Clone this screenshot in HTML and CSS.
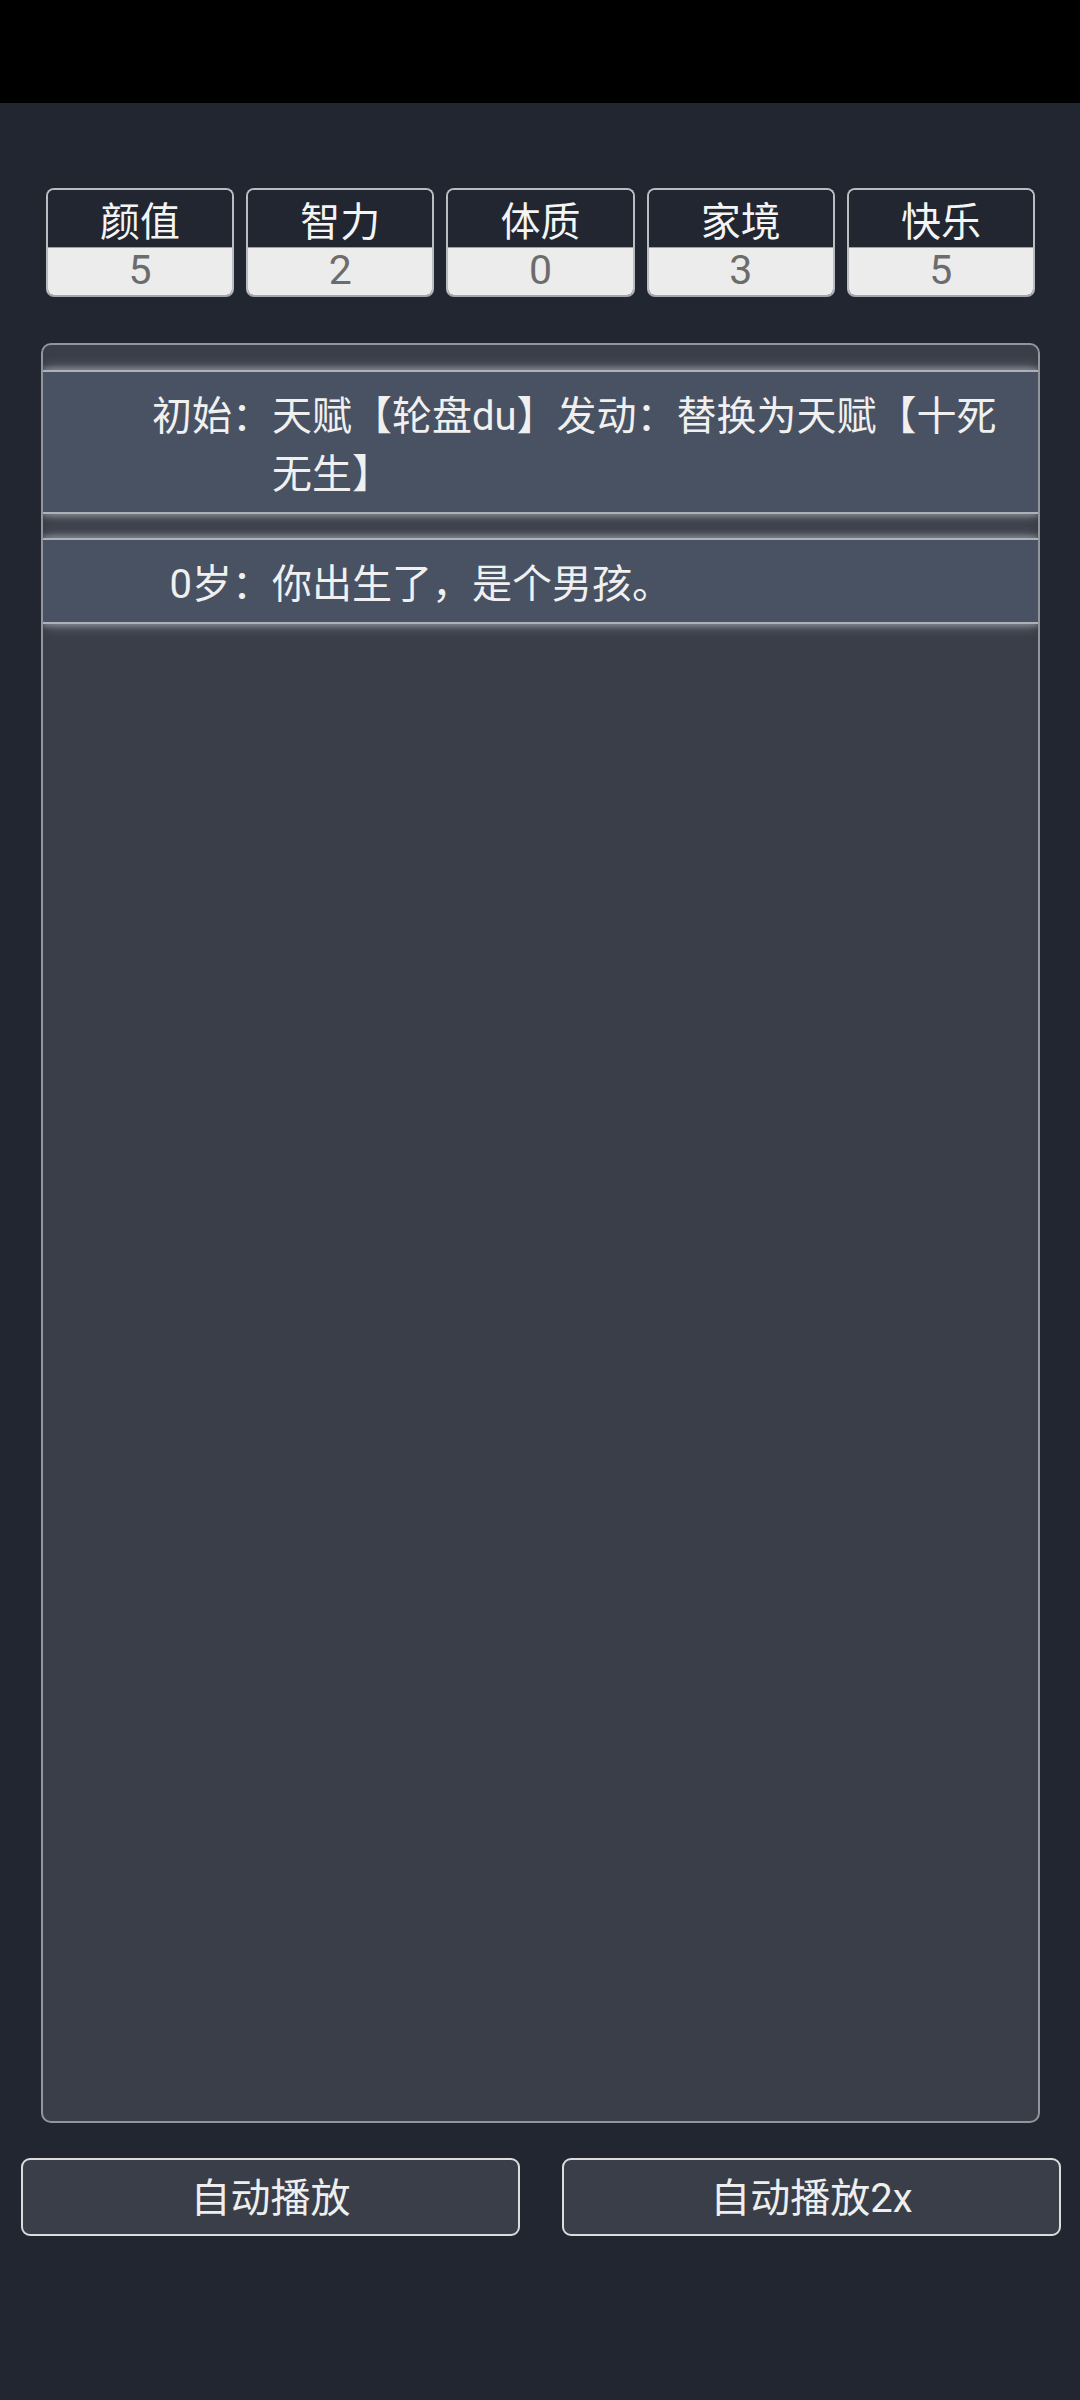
FILE: index.html
```html
<!DOCTYPE html>
<html lang="zh-CN">
<head>
<meta charset="utf-8">
<title>人生重开</title>
<link rel="stylesheet" href="styles.css">
</head>
<body>
<div class="statusbar"></div>
<main class="page">
  <section class="stats">
    <div class="stat"><div class="stat-name">颜值</div><div class="stat-value">5</div></div>
    <div class="stat"><div class="stat-name">智力</div><div class="stat-value">2</div></div>
    <div class="stat"><div class="stat-name">体质</div><div class="stat-value">0</div></div>
    <div class="stat"><div class="stat-name">家境</div><div class="stat-value">3</div></div>
    <div class="stat"><div class="stat-name">快乐</div><div class="stat-value">5</div></div>
  </section>
  <section class="log">
    <div class="entry">
      <div class="entry-age">初始：</div>
      <div class="entry-text">天赋【轮盘du】发动：替换为天赋【十死无生】</div>
    </div>
    <div class="entry">
      <div class="entry-age">0岁：</div>
      <div class="entry-text">你出生了，是个男孩。</div>
    </div>
  </section>
  <section class="controls">
    <button class="btn">自动播放</button>
    <button class="btn">自动播放2x</button>
  </section>
</main>
</body>
</html>
```
FILE: styles.css
```css
html, body {
  margin: 0;
  padding: 0;
}
*, *::before, *::after {
  box-sizing: border-box;
}
body {
  background: #212631;
  font-family: Roboto, "Noto Sans CJK SC", sans-serif;
  color: #eeeeee;
  width: 1080px;
  height: 2400px;
  overflow: hidden;
}
.statusbar {
  height: 103px;
  background: #000000;
}
.page {
  display: flex;
  flex-direction: column;
}
.stats {
  margin: 85px 45px 0 46px;
  display: grid;
  grid-template-columns: repeat(5, 1fr);
  gap: 12px;
}
.stat {
  height: 109px;
  border: 2px solid #b9bcc1;
  border-bottom-color: #a3a6ab;
  border-radius: 8px;
  overflow: hidden;
  display: flex;
  flex-direction: column;
}
.stat-name {
  height: 57px;
  padding-top: 6px;
  line-height: 54px;
  text-align: center;
  font-size: 40px;
  color: #f4f4f4;
  background: #212631;
}
.stat-value {
  flex: 1;
  line-height: 44px;
  text-align: center;
  font-size: 41px;
  color: #6c6c6c;
  background: #ececec;
  border-top: 1px solid #9ea1a6;
}
.log {
  margin: 46px 40px 0 41px;
  height: 1780px;
  background: #3a3e48;
  border: 2px solid #92959b;
  border-radius: 10px;
  overflow: hidden;
  padding-top: 25px;
  display: flex;
  flex-direction: column;
  gap: 24px;
}
.entry {
  display: grid;
  grid-template-columns: 229px 1fr;
  background: #485263;
  border-top: 2px solid #aeb2b8;
  border-bottom: 2px solid #aeb2b8;
  padding: 16px 0 8px;
  font-size: 40px;
  line-height: 58px;
  color: #f0f0f0;
  box-shadow:
    0 -3px 4px 0 rgba(190, 195, 202, 0.35),
    0 -8px 10px -3px rgba(150, 155, 162, 0.35),
    0 3px 4px 0 rgba(190, 195, 202, 0.35),
    0 8px 10px -3px rgba(150, 155, 162, 0.35);
}
.entry-age {
  text-align: right;
  white-space: nowrap;
}
.entry-text {
  padding-right: 20px;
}
.controls {
  margin: 35px 19px 0 21px;
  display: grid;
  grid-template-columns: 1fr 1fr;
  gap: 42px;
}
.btn {
  height: 78px;
  background: #3a3e48;
  border: 2px solid #dcdcdc;
  border-radius: 9px;
  color: #eeeeee;
  font-family: Roboto, "Noto Sans CJK SC", sans-serif;
  font-size: 40px;
  padding: 4px 0 0;
  line-height: 70px;
}
```
